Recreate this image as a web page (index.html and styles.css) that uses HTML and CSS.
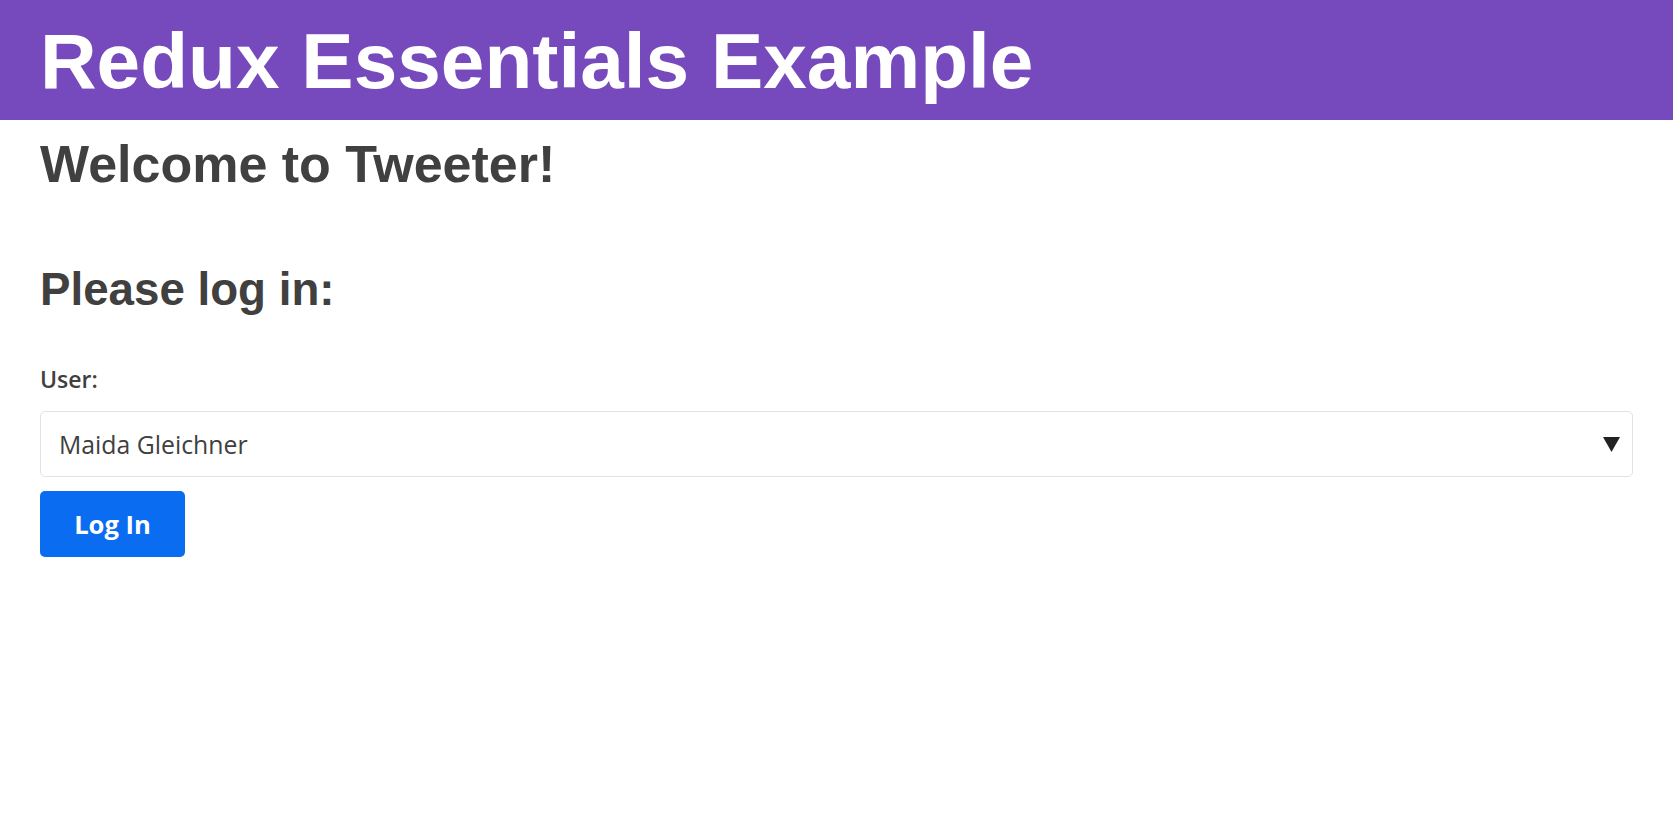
FILE: index.html
```html
<!DOCTYPE html>
<html lang="en">
<head>
<meta charset="utf-8">
<title>Redux Essentials Example</title>
<link rel="stylesheet" href="styles.css">
</head>
<body>
<nav class="navbar">
  <h1 class="navbar-title">Redux Essentials Example</h1>
</nav>
<main class="page">
  <h2 class="welcome">Welcome to Tweeter!</h2>
  <h3 class="login-title">Please log in:</h3>
  <form class="login-form">
    <label class="field-label" for="userSelect">User:</label>
    <div class="select-wrap">
      <select id="userSelect" class="user-select">
        <option>Maida Gleichner</option>
      </select>
      <svg class="select-arrow" width="17" height="15" viewBox="0 0 17 15" aria-hidden="true">
        <polygon points="0,0 17,0 8.5,15" fill="#222"/>
      </svg>
    </div>
    <button type="button" class="login-button">Log In</button>
  </form>
</main>
</body>
</html>
```
FILE: styles.css
```css
* { box-sizing: border-box; }

body {
  margin: 0;
  background: #fff;
  color: #404040;
  font-family: "Open Sans", "Noto Sans", sans-serif;
}

.navbar {
  background: #764abc;
  padding: 16px 40px 13px;
}

.navbar-title {
  margin: 0;
  color: #fff;
  font-family: "Liberation Sans", Arial, sans-serif;
  font-weight: 700;
  font-size: 78.4px;
  line-height: 90.5px;
}

.page {
  padding: 0 40px;
  display: flex;
  flex-direction: column;
}

.welcome {
  margin: 14.5px 0 0;
  font-family: "Liberation Sans", Arial, sans-serif;
  font-weight: 700;
  font-size: 52px;
  line-height: normal;
  color: #404040;
}

.login-title {
  margin: 70px 0 0;
  font-family: "Liberation Sans", Arial, sans-serif;
  font-weight: 700;
  font-size: 45.7px;
  line-height: normal;
  color: #404040;
}

.login-form {
  display: flex;
  flex-direction: column;
  align-items: flex-start;
  margin-top: 47px;
}

.field-label {
  font-size: 23px;
  font-weight: 600;
  line-height: normal;
  color: #404040;
}

.select-wrap {
  position: relative;
  width: 100%;
  margin-top: 16px;
}

.user-select {
  display: block;
  width: 100%;
  height: 66px;
  padding: 0 50px 0 18px;
  border: 1px solid #e3e3e3;
  border-radius: 5px;
  background: #fff;
  color: #404040;
  font-family: "Open Sans", "Noto Sans", sans-serif;
  font-size: 24.8px;
  appearance: none;
  -webkit-appearance: none;
}

.select-arrow {
  position: absolute;
  right: 13px;
  top: 26px;
  pointer-events: none;
}

.login-button {
  margin-top: 14px;
  width: 145px;
  height: 66px;
  border: none;
  border-radius: 5px;
  background: #0a6cf0;
  color: #fff;
  font-family: "Open Sans", "Noto Sans", sans-serif;
  font-size: 25.6px;
  font-weight: 700;
  cursor: pointer;
}
```
